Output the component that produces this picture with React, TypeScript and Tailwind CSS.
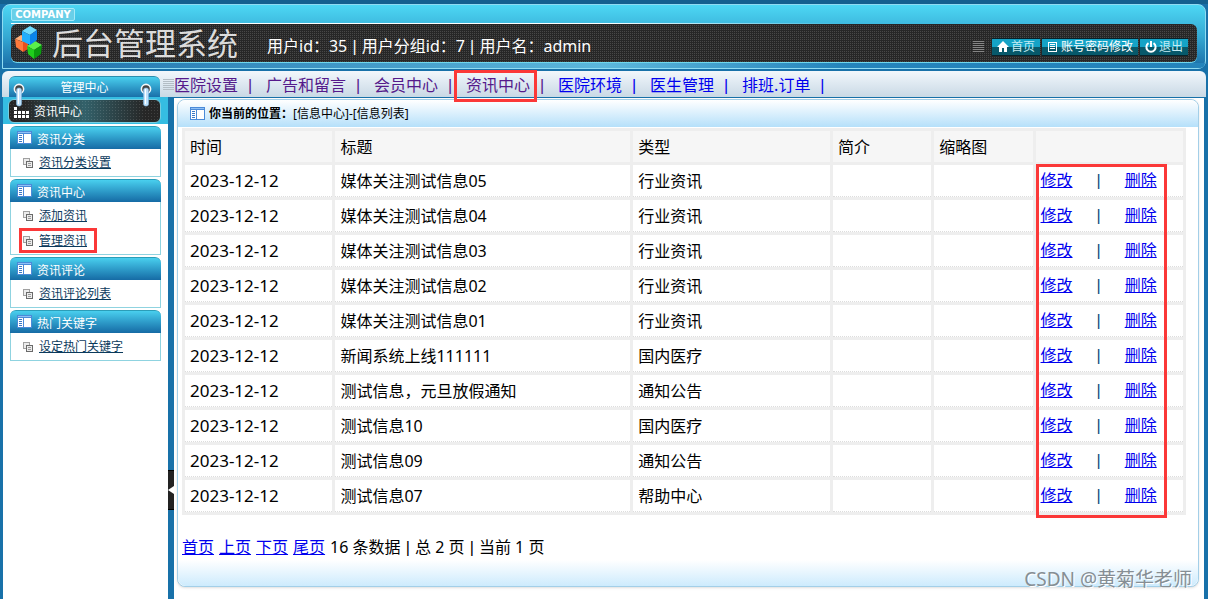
import { useState } from 'react'

const user = { id: 35, group: 7, name: 'admin' }

const navItems = [
  { label: '医院设置', visited: true },
  { label: '广告和留言', visited: true },
  { label: '会员中心', visited: true },
  { label: '资讯中心', visited: true, marked: true },
  { label: '医院环境', visited: false },
  { label: '医生管理', visited: false },
  { label: '排班.订单', visited: false },
]

const menuGroups = [
  { title: '资讯分类', links: ['资讯分类设置'] },
  { title: '资讯中心', links: ['添加资讯', '管理资讯'] },
  { title: '资讯评论', links: ['资讯评论列表'] },
  { title: '热门关键字', links: ['设定热门关键字'] },
]

const articles = [
  { date: '2023-12-12', title: '媒体关注测试信息05', type: '行业资讯' },
  { date: '2023-12-12', title: '媒体关注测试信息04', type: '行业资讯' },
  { date: '2023-12-12', title: '媒体关注测试信息03', type: '行业资讯' },
  { date: '2023-12-12', title: '媒体关注测试信息02', type: '行业资讯' },
  { date: '2023-12-12', title: '媒体关注测试信息01', type: '行业资讯' },
  { date: '2023-12-12', title: '新闻系统上线111111', type: '国内医疗' },
  { date: '2023-12-12', title: '测试信息，元旦放假通知', type: '通知公告' },
  { date: '2023-12-12', title: '测试信息10', type: '国内医疗' },
  { date: '2023-12-12', title: '测试信息09', type: '通知公告' },
  { date: '2023-12-12', title: '测试信息07', type: '帮助中心' },
]

function Logo() {
  return (
    <svg width="28" height="34" viewBox="0 0 28 34" className="shrink-0">
      {/* orange */}
      <path d="M0 13l6-4 8 3-5 4z" fill="#ffb07a" />
      <path d="M0 13l8 3v10l-7-5z" fill="#ff7a3c" />
      <path d="M8 16l5-3v10l-5 3z" fill="#e8501c" />
      {/* green */}
      <path d="M12 20l8-5 7 4-8 5z" fill="#5af04a" />
      <path d="M12 20l7 4v9l-6-5z" fill="#1fcf1c" />
      <path d="M19 24l8-5-1 9-7 5z" fill="#0a9d0e" />
      {/* blue */}
      <path d="M7 5l8-5 7 4-7 5z" fill="#6fdcff" />
      <path d="M7 5l8 4v10l-8-4z" fill="#22aefc" />
      <path d="M15 9l7-5v10l-7 5z" fill="#0a84ea" />
    </svg>
  )
}

function Stripes({ color }: { color: string }) {
  return (
    <svg width="11" height="12" viewBox="0 0 11 12" className="shrink-0" stroke={color} shapeRendering="crispEdges">
      <path d="M0 .5h11M0 2.5h11M0 4.5h11M0 6.5h11M0 8.5h11M0 10.5h11" />
    </svg>
  )
}

function Ring() {
  return (
    <svg width="12" height="24" viewBox="0 0 12 24">
      <circle cx="6" cy="6" r="4.6" fill="#444" stroke="#f2f6f8" strokeWidth="1.6" />
      <rect x="3.5" y="5" width="5" height="18" rx="2" fill="#bfe1fb" stroke="#7fb4dc" strokeWidth=".6" />
      <path d="M5.5 6v15" stroke="#fff" />
    </svg>
  )
}

function PanelIcon() {
  return (
    <svg width="15" height="13" viewBox="0 0 15 13" className="shrink-0" shapeRendering="crispEdges">
      <path d="M0 0h15v13H0z" fill="#4a8ad8" />
      <path d="M1 1h13v1H1z" fill="#8fc0f5" />
      <path d="M1 3h5v9H1zM7 3h7v9H7z" fill="#fff" />
      <path d="M2 4.5h3M2 6.5h3M2 8.5h3M2 10.5h3" stroke="#3b78c4" />
    </svg>
  )
}

function CopyIcon() {
  return (
    <svg width="10" height="10" viewBox="0 0 10 10" className="shrink-0" shapeRendering="crispEdges" fill="#ececec">
      <path d="M.5 .5h6v6h-6z" stroke="#a0a0a0" />
      <path d="M3.5 3.5h6v6h-6z" stroke="#6a6a6a" />
      <path d="M5 5.5h3M5 7.5h3" stroke="#999" />
    </svg>
  )
}

function GridIcon() {
  return (
    <svg width="15" height="11" viewBox="0 0 15 11" className="shrink-0" shapeRendering="crispEdges" fill="#fff">
      <path d="M0 0h3v3H0zM0 4h3v3H0zM4 4h3v3H4zM8 4h3v3H8zM12 4h3v3h-3zM0 8h3v3H0zM4 8h3v3H4zM8 8h3v3H8zM12 8h3v3h-3z" />
    </svg>
  )
}

function Pipe() {
  return <span className="mx-px font-['Liberation_Sans']">|</span>
}

const toolButton =
  'flex h-[18px] items-center gap-0.5 border-y border-[#08222a] bg-linear-to-b from-[#15a3c6] from-50% to-[#07596b] to-50% px-[5px] text-xs leading-4'

function Header() {
  return (
    <div className="border-t-4 border-[#14618f] px-0.5">
      <header className="rounded-t-lg rounded-br-lg border border-[#8fdcf2] bg-linear-to-b from-[#4dd8f4] via-[#35a9d3] to-[#1a6ca6] px-2 pt-[3px]">
        <div className="mb-0.5 flex">
          <span className="flex h-[13px] w-16 items-center justify-center rounded-xs border border-[#a5eaf8] bg-[#69cfe8] font-['DejaVu_Sans'] text-[10px] leading-none font-bold text-white">
            COMPANY
          </span>
        </div>
        <div className="h-px bg-linear-to-r from-white from-50% to-transparent to-70%" />
        <div className="flex h-[38px] items-center rounded-md bg-[#484848] bg-[linear-gradient(#272727_50%,transparent_50%),linear-gradient(90deg,#272727_50%,transparent_50%)] bg-size-[2px_2px] pr-[9px] pl-1 shadow-[0_1px_0_#6fd8ee]">
          <Logo />
          <h1 className="ml-[9px] text-[31px] leading-9 whitespace-nowrap text-[#dcdcdc]">后台管理系统</h1>
          <p className="ml-[29px] pt-1.5 text-base leading-6 whitespace-nowrap text-white">
            用户id：{user.id} <Pipe /> 用户分组id：{user.group} <Pipe /> 用户名：{user.name}
          </p>
          <div className="ml-auto flex items-center gap-0.5 pt-2">
            <span className="mr-1.5">
              <Stripes color="#858585" />
            </span>
            <button type="button" className={`${toolButton} text-[#c4ecf4]`}>
              <svg width="12" height="12" viewBox="0 0 12 12" fill="#fff">
                <path d="M6 0l6 6h-2v5H7V7H5v4H2V6H0z" />
              </svg>
              首页
            </button>
            <button type="button" className={`${toolButton} text-white`}>
              <svg width="12" height="12" viewBox="0 0 12 12" fill="none" stroke="#fff" shapeRendering="crispEdges">
                <path d="M1.5 1.5h8v9h-8zM3 3.5h5M3 5.5h5M3 7.5h5" />
              </svg>
              账号密码修改
            </button>
            <button type="button" className={`${toolButton} text-[#c4ecf4]`}>
              <svg width="12" height="12" viewBox="0 0 12 12" fill="none" stroke="#fff" strokeWidth="2">
                <path d="M3.5 2.2a4.6 4.6 0 1 0 5 0M6 0v6" />
              </svg>
              退出
            </button>
          </div>
        </div>
        <div className="-mx-2 mt-px h-[5px] rounded-br-lg bg-linear-to-r from-[#1b70aa] via-[#5cb7dc] to-[#2484bb] to-70%" />
      </header>
    </div>
  )
}

function TopNav() {
  return (
    <div className="mx-0.5 mt-0.5 flex h-[26px] rounded-t-md bg-linear-to-b from-[#f2f7fc] to-[#c9d9e5] pl-[7px]">
      <div className="relative mt-[5px] w-[151px] shrink-0 rounded-t-md border-t border-[#2b8eae] bg-linear-to-b from-[#49cfee] to-[#1a70a9] pt-px text-center text-xs leading-5 text-white">
        管理中心
        <span className="absolute top-1.5 left-1 z-10">
          <Ring />
        </span>
        <span className="absolute top-1.5 right-2 z-10">
          <Ring />
        </span>
      </div>
      <nav className="ml-[3px] flex items-center pt-0.5 text-base leading-6 whitespace-nowrap">
        <Stripes color="#b3bdc5" />
        {navItems.map((item) => (
          <div key={item.label} className={item.visited ? 'flex text-[#551a8b]' : 'flex text-[#0000ee]'}>
            <a href="#" className="relative">
              {item.label}
              {item.marked && (
                <span className="absolute -top-[3px] -right-[7px] -bottom-1 -left-3 z-10 border-3 border-[#fb3838]" />
              )}
            </a>
            <span className="w-7 pr-1 text-center">
              <Pipe />
            </span>
          </div>
        ))}
      </nav>
    </div>
  )
}

function Sidebar() {
  const [current, setCurrent] = useState('管理资讯')

  return (
    <aside className="w-[165px] shrink-0 bg-white text-xs">
      <div className="bg-[#35bde2] px-[5px] pt-0.5 pb-px">
        <div className="mr-0.5 flex h-6 items-center gap-[5px] rounded-md border border-[#77ccdf] bg-[radial-gradient(#ffffff20_1px,transparent_1px),linear-gradient(to_right,#262626_10%,#33616a_50%,#262626_90%)] bg-size-[3px_3px,100%_100%] pt-0.5 pl-[5px] text-white">
          <GridIcon />
          资讯中心
        </div>
      </div>
      <div className="flex flex-col gap-0.5 px-[7px] pt-0.5">
        {menuGroups.map((group) => (
          <section key={group.title}>
            <h2 className="flex h-[23px] gap-[5px] rounded-t-md border-t border-[#2b9db8] bg-linear-to-b from-[#49cfee] to-[#166ba5] pt-1 pl-[7px] leading-[18px] text-white">
              <PanelIcon />
              {group.title}
            </h2>
            <ul className="border border-t-0 border-[#8fd3e0] pt-px pb-px">
              {group.links.map((link) => (
                <li key={link} className="relative flex h-[25px] items-center gap-1.5 pl-3">
                  <CopyIcon />
                  <a href="#" onClick={() => setCurrent(link)} className="text-[#0b3a5c] underline">
                    {link}
                  </a>
                  {current === link && (
                    <span className="absolute inset-y-0 left-2 w-[78px] border-3 border-[#fb3838]" />
                  )}
                </li>
              ))}
            </ul>
          </section>
        ))}
      </div>
    </aside>
  )
}

function ArticleTable() {
  return (
    <div className="relative">
      <table className="w-full table-fixed border-separate border-spacing-[3px] bg-[#eeeeee] text-left text-base leading-6">
        <thead>
          <tr className="h-[31px] *:bg-[#f6f6f6] *:p-0 *:pl-[5px] *:font-normal">
            <th className="w-[15%]">时间</th>
            <th className="w-[30%]">标题</th>
            <th className="w-[20%]">类型</th>
            <th className="w-[10%]">简介</th>
            <th className="w-[10%]">缩略图</th>
            <th className="w-[15%]"></th>
          </tr>
        </thead>
        <tbody>
          {articles.map((article) => (
            <tr
              key={article.title}
              className="h-8 *:border-b *:border-dotted *:border-[#dddddd] *:bg-white *:p-0 *:pl-[5px]"
            >
              <td className="text-[17px]">{article.date}</td>
              <td>{article.title}</td>
              <td>{article.type}</td>
              <td></td>
              <td></td>
              <td>
                <div className="flex gap-[23px] text-[#0000ee]">
                  <a href="#" className="underline">修改</a>
                  <span className="text-[#0b4a7a]">
                    <Pipe />
                  </span>
                  <a href="#" className="underline">删除</a>
                </div>
              </td>
            </tr>
          ))}
        </tbody>
      </table>
      <div className="pointer-events-none absolute top-9 right-[19px] -bottom-[3px] w-[131px] border-3 border-[#fb3838]" />
    </div>
  )
}

export default function App() {
  return (
    <div className="relative flex min-h-screen flex-col overflow-hidden bg-[#1871a9] font-['Noto_Sans','Noto_Sans_CJK_SC',sans-serif] text-black">
      <Header />
      <TopNav />

      <div className="flex flex-1 pr-1 pl-[3px]">
        <Sidebar />

        {/* Splitter */}
        <div className="flex w-1.5 shrink-0 flex-col justify-end pb-[89px]">
          <button type="button" aria-label="收起菜单" className="h-10 border-y border-black bg-[#222222]">
            <svg width="6" height="10" viewBox="0 0 6 10" fill="#fff">
              <path d="M0 5l6-4v8z" />
            </svg>
          </button>
        </div>

        <main className="mt-px flex min-w-0 flex-1 flex-col bg-white pt-px pr-[5px] pb-3 pl-[3px]">
          <div className="flex flex-1 flex-col rounded-lg border border-[#a3cfe8] bg-white shadow-sm">
            <div className="flex h-[27px] shrink-0 items-center rounded-t-lg bg-linear-to-b from-white to-[#b5e0fa] pl-3 text-xs">
              <PanelIcon />
              <strong className="ml-1 text-xs">你当前的位置：</strong>
              <span>[信息中心]-[信息列表]</span>
            </div>
            <div className="pt-px pr-3 pl-1">
              <ArticleTable />
              <div className="mt-5 flex gap-[5px] text-base leading-6">
                <a href="#" className="text-[#0000ee] underline">首页</a>
                <a href="#" className="text-[#0000ee] underline">上页</a>
                <a href="#" className="text-[#0000ee] underline">下页</a>
                <a href="#" className="text-[#0000ee] underline">尾页</a>
                <span>
                  16 条数据 <Pipe /> 总 2 页 <Pipe /> 当前 1 页
                </span>
              </div>
            </div>
            <div className="min-h-6 flex-1 rounded-b-lg bg-linear-to-b from-white to-[#cdebfd]" />
          </div>
        </main>
      </div>

      <span className="absolute right-4 bottom-2 text-[19px] leading-6 text-[#868e94] text-shadow-[1px_1px_0_#ffffff]">
        CSDN @黄菊华老师
      </span>
    </div>
  )
}
